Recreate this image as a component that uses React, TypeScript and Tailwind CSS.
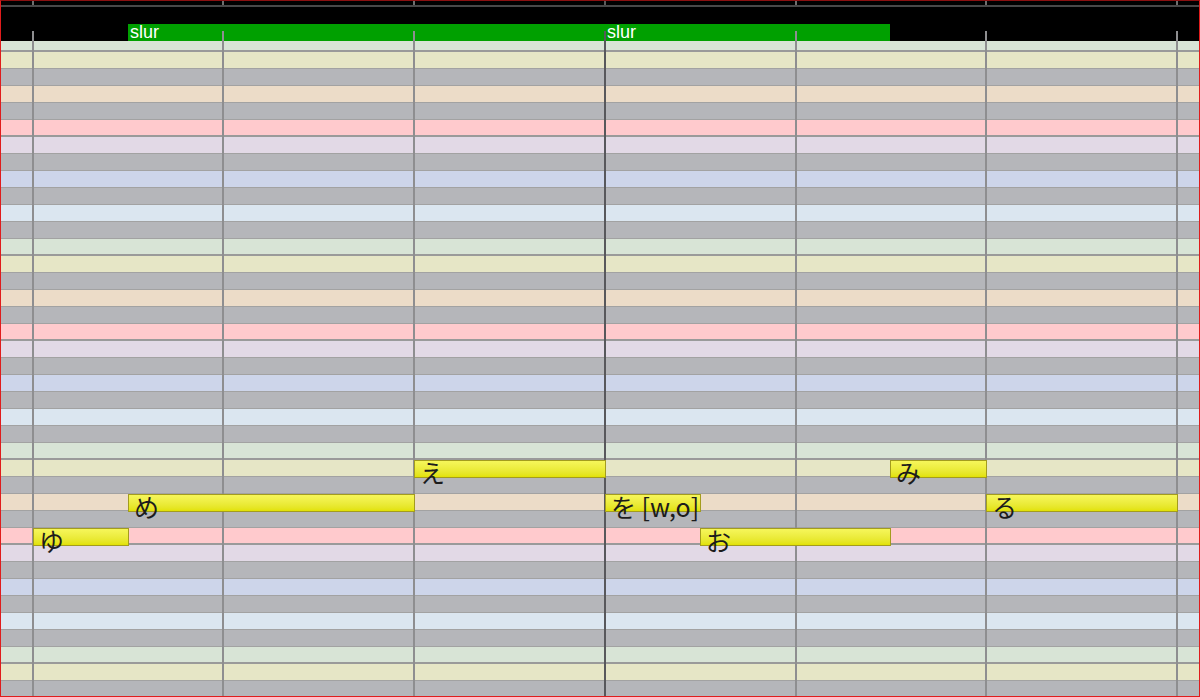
import React from 'react';

// one octave, top to bottom: F E D# D C# C B A# A G# G F#
const KEYS = [
  { bg: 'bg-[#d8e4d6]', edge: 'border-b-2 border-[#9a9a9a]' },
  { bg: 'bg-[#e6e6c6]', edge: 'border-b border-[#a2a2a2]' },
  { bg: 'bg-[#b5b6ba]', edge: 'border-b border-[#a2a2a2]' },
  { bg: 'bg-[#ecdcc8]', edge: 'border-b border-[#a2a2a2]' },
  { bg: 'bg-[#b5b6ba]', edge: 'border-b border-[#a2a2a2]' },
  { bg: 'bg-[#ffcacd]', edge: 'border-b-2 border-[#9a9a9a]' },
  { bg: 'bg-[#e2d9e6]', edge: 'border-b border-[#a2a2a2]' },
  { bg: 'bg-[#b5b6ba]', edge: 'border-b border-[#a2a2a2]' },
  { bg: 'bg-[#cdd5ea]', edge: 'border-b border-[#a2a2a2]' },
  { bg: 'bg-[#b5b6ba]', edge: 'border-b border-[#a2a2a2]' },
  { bg: 'bg-[#dbe6f0]', edge: 'border-b border-[#a2a2a2]' },
  { bg: 'bg-[#b5b6ba]', edge: 'border-b border-[#a2a2a2]' },
];

const ROW_H = 17;
const ROLL_TOP = 35; // first row starts under the header
const ROW_COUNT = 39;

const BEATS = [33, 223, 414, 605, 796, 986, 1177];
const BAR = 605;

const NOTES = [
  { row: 29, x1: 33, x2: 128, lyric: 'ゆ' },
  { row: 27, x1: 128, x2: 414, lyric: 'め' },
  { row: 25, x1: 414, x2: 605, lyric: 'え' },
  { row: 27, x1: 605, x2: 700, lyric: 'を [w,o]' },
  { row: 29, x1: 700, x2: 890, lyric: 'お' },
  { row: 25, x1: 890, x2: 986, lyric: 'み' },
  { row: 27, x1: 986, x2: 1177, lyric: 'る' },
];

// expression lane, starts at x=128
const SLURS = [477, 285];

const jp = { fontFamily: '"Noto Sans CJK JP", "Noto Sans", sans-serif' };

export default function App() {
  return (
    <div className="relative w-[1200px] h-[697px] overflow-hidden bg-black select-none">
      {/* header: tempo strip + expression lane */}
      <div className="h-[41px] flex flex-col">
        <div className="h-[5px] border-t border-[#7a1414]" />
        <div className="h-[2px] bg-[#484848]" />
        <div className="flex-1 flex items-end pl-[128px]">
          {SLURS.map((w, i) => (
            <div
              key={i}
              className="h-[17px] shrink-0 bg-[#00a000] text-white text-[18px] leading-[17px] pl-[2px]"
              style={{ width: w, fontFamily: '"Liberation Sans", Arial, sans-serif' }}
            >
              slur
            </div>
          ))}
        </div>
      </div>

      {/* piano roll rows */}
      <div className="flex flex-col">
        {Array.from({ length: ROW_COUNT }, (_, i) => {
          const k = KEYS[i % 12];
          return (
            <div
              key={i}
              className={`${k.bg} ${k.edge} shrink-0 ${i === 0 ? 'h-[11px]' : 'h-[17px]'}`}
            />
          );
        })}
      </div>

      {/* beat lines */}
      {BEATS.map((x) => (
        <React.Fragment key={x}>
          <div
            className={`absolute top-0 h-[5px] w-[2px] ${x === BAR ? 'bg-[#5a5a5a]' : 'bg-[#6e6e6e]'}`}
            style={{ left: x - 1 }}
          />
          <div
            className={`absolute top-[31px] bottom-0 w-[2px] ${x === BAR ? 'bg-[#58585c]' : 'bg-[#8e8e90]'}`}
            style={{ left: x - 1 }}
          />
        </React.Fragment>
      ))}

      {/* notes */}
      {NOTES.map((n) => (
        <div
          key={n.x1}
          className="absolute h-[18px] border border-[#a39c1e] bg-gradient-to-b from-[#f6f65a] to-[#e2e200]"
          style={{ left: n.x1, top: ROLL_TOP + n.row * ROW_H, width: n.x2 - n.x1 + 1 }}
        />
      ))}
      {NOTES.map((n) => (
        <div
          key={'t' + n.x1}
          className="absolute text-[25px] leading-none text-[#1c1c1c] whitespace-nowrap"
          style={{ ...jp, left: n.x1 + 6, top: ROLL_TOP + n.row * ROW_H }}
        >
          {n.lyric}
        </div>
      ))}

      {/* window frame */}
      <div className="absolute inset-0 border border-[#e01c1c] border-t-[#8a1010] pointer-events-none" />
    </div>
  );
}
